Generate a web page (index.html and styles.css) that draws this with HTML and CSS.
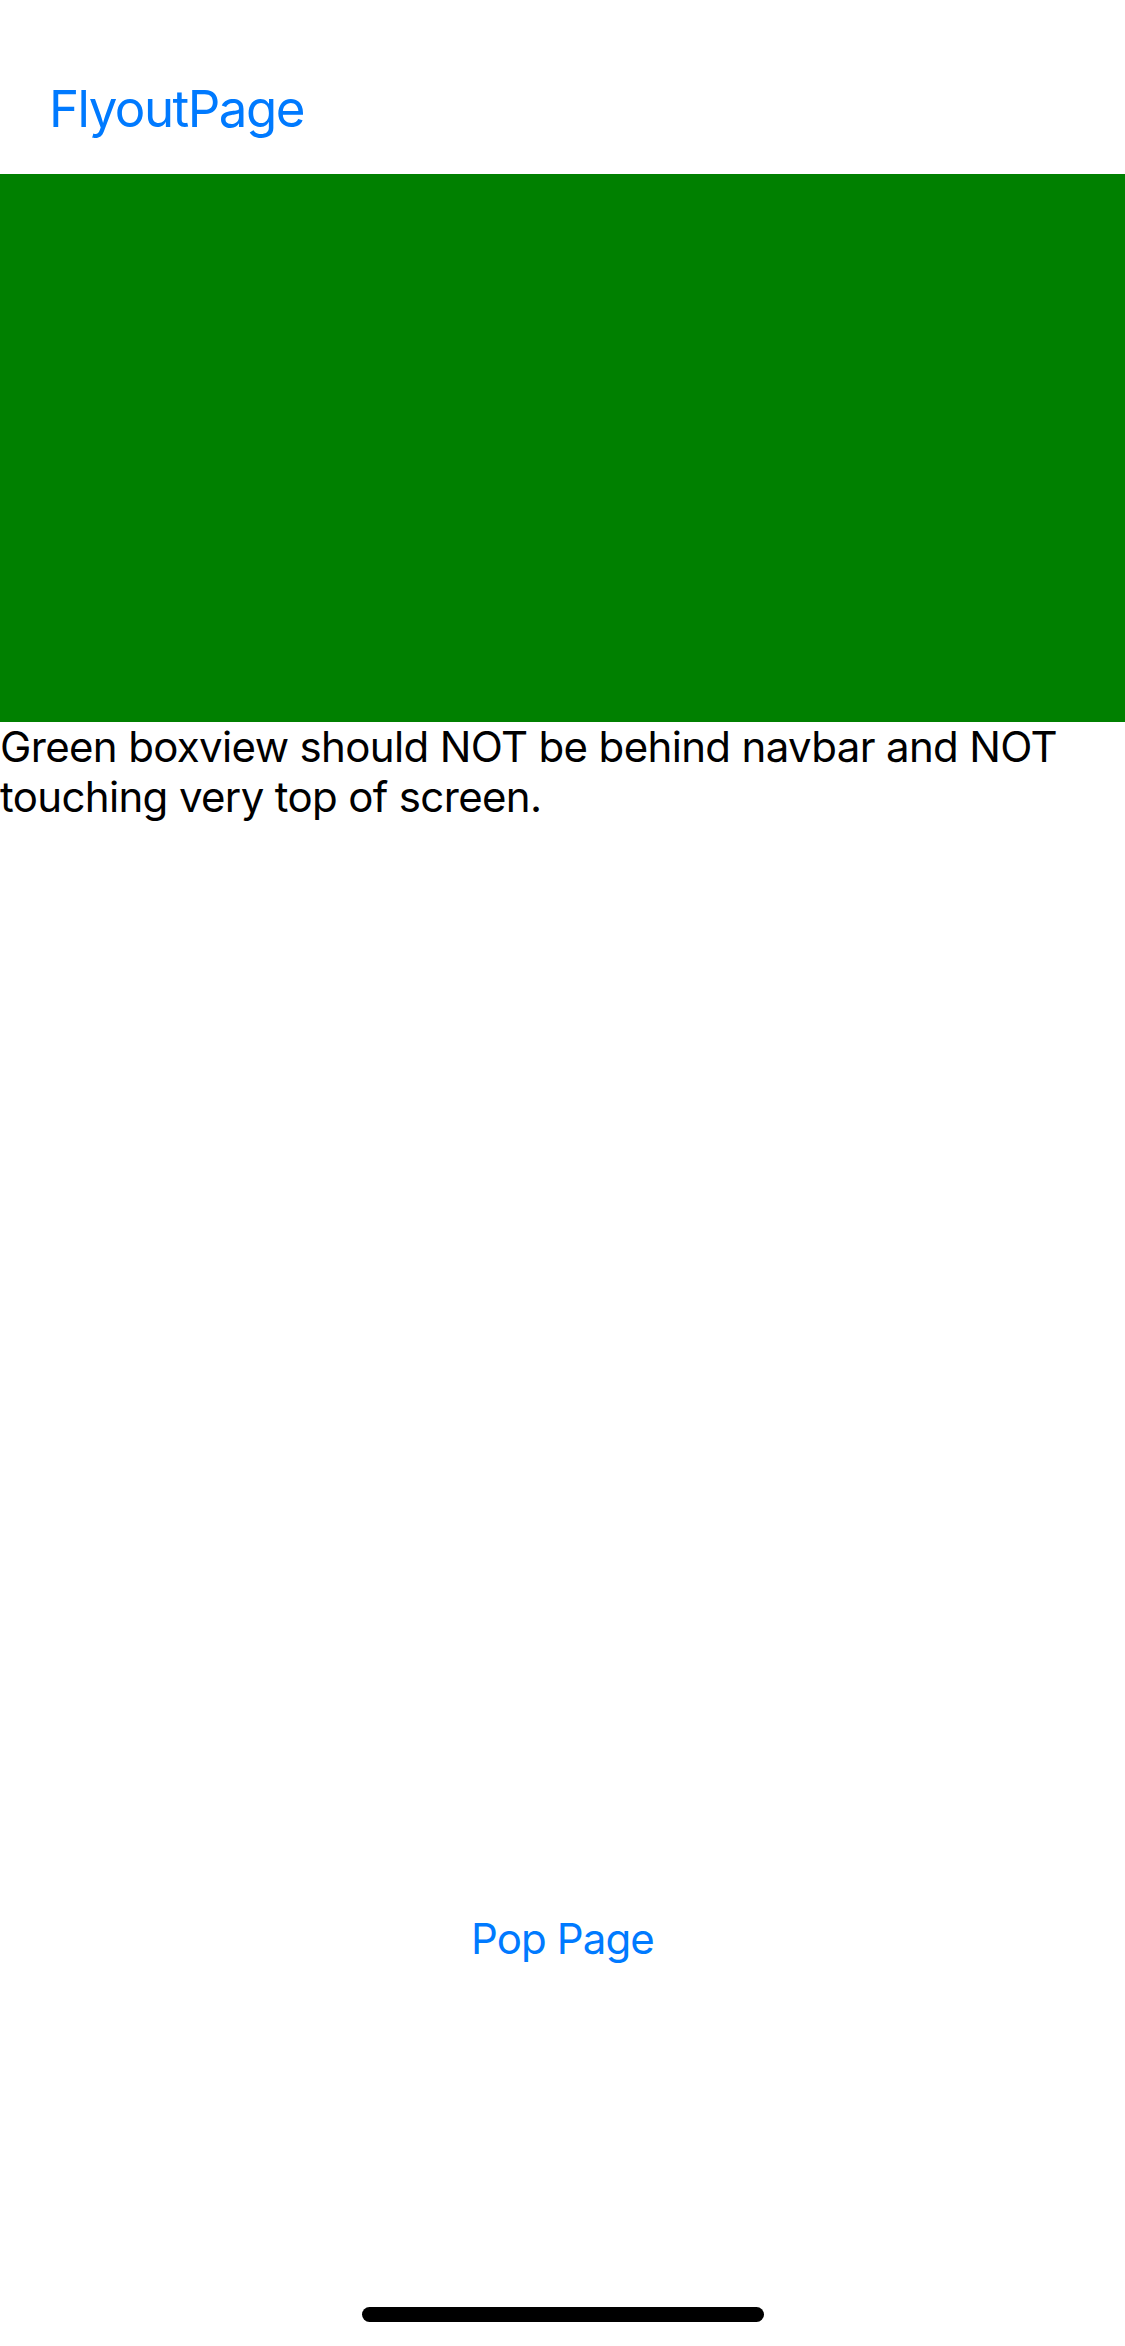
FILE: index.html
```html
<!DOCTYPE html>
<html>
<head>
<meta charset="utf-8">
<link rel="stylesheet" href="styles.css">
</head>
<body>
<div class="screen">
  <header class="navbar">
    <span class="nav-title">FlyoutPage</span>
  </header>
  <div class="green-box"></div>
  <p class="message">Green boxview should NOT be behind navbar and NOT touching very top of screen.</p>
  <div class="pop-row">
    <span class="pop-button">Pop Page</span>
  </div>
  <div class="home-indicator"></div>
</div>
</body>
</html>
```

FILE: styles.css
```css
html, body {
  margin: 0;
  padding: 0;
  background: #ffffff;
}

.screen {
  width: 1125px;
  height: 2346px;
  display: flex;
  flex-direction: column;
  font-family: Inter, "Noto Sans", "Liberation Sans", sans-serif;
  overflow: hidden;
}

.navbar {
  height: 174px;
  box-sizing: border-box;
  padding: 78px 0 0 49px;
  flex: none;
}

.nav-title {
  font-size: 51px;
  line-height: 61px;
  letter-spacing: -1.5px;
  color: #007aff;
  display: block;
}

.green-box {
  height: 548px;
  background: #008000;
  flex: none;
}

.message {
  margin: 0;
  font-size: 42px;
  line-height: 50px;
  letter-spacing: -0.65px;
  color: #000000;
}

.pop-row {
  margin-top: 1087px;
  display: flex;
  justify-content: center;
}

.pop-button {
  font-size: 42px;
  line-height: 60px;
  letter-spacing: -0.9px;
  color: #007aff;
}

.home-indicator {
  margin: auto auto 24px auto;
  width: 402px;
  height: 15px;
  border-radius: 8px;
  background: #000000;
}
```
